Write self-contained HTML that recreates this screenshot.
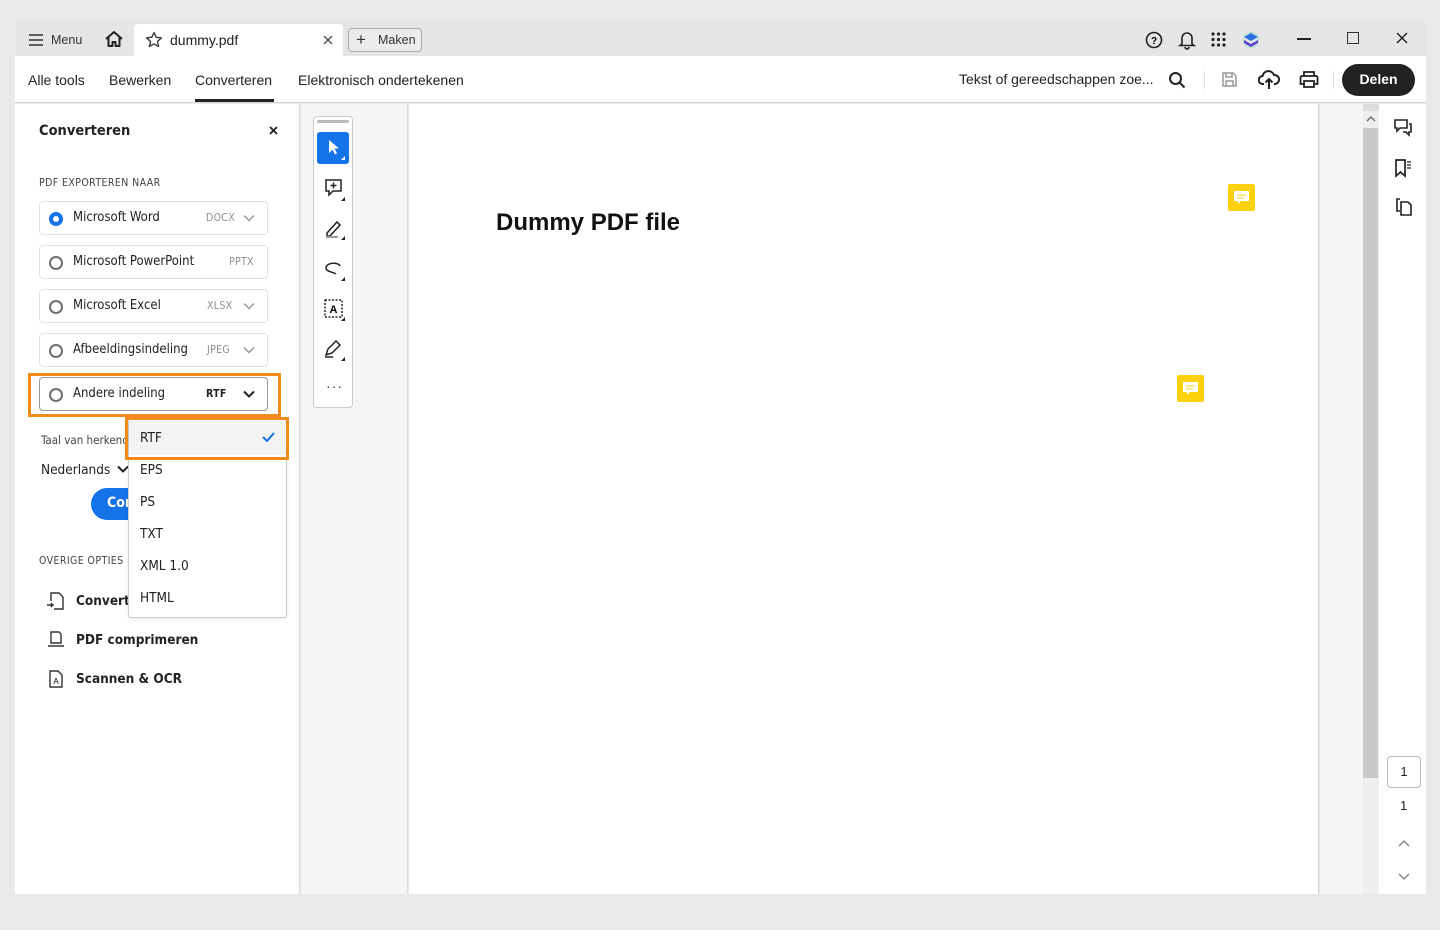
<!DOCTYPE html>
<html><head><meta charset="utf-8"><style>
*{box-sizing:border-box;margin:0;padding:0}
body{width:1440px;height:930px;background:#e9e9e9;font-family:"Liberation Sans",sans-serif;position:relative;overflow:hidden;color:#222}
.a{position:absolute}
.sn{font-family:"DejaVu Sans Condensed","Liberation Sans",sans-serif}
.opt{position:absolute;left:39px;width:229px;height:34px;border:1px solid #e1e1e1;border-radius:4px;background:#fff}
.opt .r{position:absolute;left:9px;top:10px;width:14px;height:14px;border:2px solid #6e6e6e;border-radius:50%}
.opt .l{position:absolute;left:33px;top:8px;font-size:13px;color:#222}
.opt .f{position:absolute;top:10px;font-size:10.5px;color:#8e8e8e;letter-spacing:.3px}
.opt svg{position:absolute;right:12px;top:12px}
.dd{position:absolute;left:140px;font-size:13.5px;color:#222}
.ti{position:absolute;left:322px;width:24px;height:24px}
</style></head><body>
<div class="a" style="left:15px;top:21px;width:1411px;height:35px;background:#e6e6e6"></div>
<div class="a" style="left:15px;top:56px;width:1411px;height:47px;background:#fff;border-bottom:1px solid #d5d5d5"></div>
<svg class="a" style="left:28px;top:33px" width="16" height="14"><path d="M1 2h14M1 7h14M1 12h14" stroke="#333" stroke-width="1.6"/></svg>
<div class="a" style="left:51px;top:33px;font-size:12.5px;color:#333">Menu</div>
<svg class="a" style="left:104px;top:30px" width="20" height="18"><path d="M2 9L10 2l8 7M4.5 7.5V16h4v-4h3v4h4V7.5" fill="none" stroke="#222" stroke-width="2" stroke-linejoin="round"/></svg>
<div class="a" style="left:134px;top:24px;width:209px;height:32px;background:#fff;border-radius:4px 4px 0 0"></div>
<svg class="a" style="left:145px;top:31px" width="18" height="17"><path d="M9 1.5l2.2 4.8 5.2.6-3.9 3.5 1.1 5.1L9 12.9 4.4 15.5l1.1-5.1L1.6 6.9l5.2-.6z" fill="none" stroke="#444" stroke-width="1.5" stroke-linejoin="round"/></svg>
<div class="a" style="left:170px;top:32px;font-size:14px;color:#222">dummy.pdf</div>
<svg class="a" style="left:323px;top:35px" width="10" height="10"><path d="M1 1l8 8M9 1L1 9" stroke="#555" stroke-width="1.5"/></svg>
<div class="a" style="left:348px;top:28px;width:74px;height:24px;border:1px solid #aaa;border-radius:4px;background:#ececec"></div>
<div class="a" style="left:356px;top:30px;font-size:17px;color:#333">+</div>
<div class="a" style="left:378px;top:33px;font-size:12.5px;color:#333">Maken</div>
<svg class="a" style="left:1145px;top:31px" width="18" height="18"><circle cx="9" cy="9" r="7.5" fill="none" stroke="#222" stroke-width="1.6"/><text x="9" y="13" font-size="10" font-weight="bold" text-anchor="middle" font-family="Liberation Sans">?</text></svg>
<svg class="a" style="left:1178px;top:30px" width="18" height="20"><path d="M4 14V8a5 5 0 0110 0v6l2 1.5H2zM7 17a2 2 0 004 0" fill="none" stroke="#222" stroke-width="1.6"/></svg>
<svg class="a" style="left:1211px;top:32px" width="15" height="15" fill="#222"><circle cx="2" cy="2" r="1.6"/><circle cx="7.5" cy="2" r="1.6"/><circle cx="13" cy="2" r="1.6"/><circle cx="2" cy="7.5" r="1.6"/><circle cx="7.5" cy="7.5" r="1.6"/><circle cx="13" cy="7.5" r="1.6"/><circle cx="2" cy="13" r="1.6"/><circle cx="7.5" cy="13" r="1.6"/><circle cx="13" cy="13" r="1.6"/></svg>
<svg class="a" style="left:1243px;top:32px" width="16" height="16"><path d="M8 1l7 4-7 4-7-4z" fill="#2a6fe0"/><path d="M1 8l7 4 7-4v3l-7 4-7-4z" fill="#5b3fcf"/><circle cx="8" cy="8" r="7.5" fill="none" stroke="#6dd9b5" stroke-width=".8" opacity=".6"/></svg>
<div class="a" style="left:1297px;top:38px;width:14px;height:2px;background:#222"></div>
<div class="a" style="left:1347px;top:32px;width:12px;height:12px;border:1.5px solid #333"></div>
<svg class="a" style="left:1396px;top:32px" width="12" height="12"><path d="M1 1l10 10M11 1L1 11" stroke="#222" stroke-width="1.5"/></svg>
<div class="a" style="left:28px;top:72px;font-size:14px">Alle tools</div>
<div class="a" style="left:109px;top:72px;font-size:14px">Bewerken</div>
<div class="a" style="left:195px;top:72px;font-size:14px">Converteren</div>
<div class="a" style="left:195px;top:99px;width:79px;height:3px;background:#222"></div>
<div class="a" style="left:298px;top:72px;font-size:14px">Elektronisch ondertekenen</div>
<div class="a" style="left:959px;top:71px;font-size:14px">Tekst of gereedschappen zoe...</div>
<svg class="a" style="left:1168px;top:71px" width="18" height="18"><circle cx="7.5" cy="7.5" r="5.5" fill="none" stroke="#222" stroke-width="2"/><path d="M11.5 11.5l5 5" stroke="#222" stroke-width="2"/></svg>
<div class="a" style="left:1204px;top:71px;width:1px;height:18px;background:#ddd"></div>
<svg class="a" style="left:1221px;top:71px" width="17" height="17"><path d="M2 2h10l3 3v10H2z M5 2v4h6V2 M5 15v-5h7v5" fill="none" stroke="#999" stroke-width="1.5"/></svg>
<svg class="a" style="left:1258px;top:69px" width="22" height="22"><path d="M6 15H5a4 4 0 01-.5-8A6 6 0 0116 6a4.5 4.5 0 011 9h-1M11 20V10M7.5 13.5L11 10l3.5 3.5" fill="none" stroke="#222" stroke-width="2"/></svg>
<svg class="a" style="left:1299px;top:70px" width="20" height="19"><path d="M5 6V2h10v4M3 6h14a1.5 1.5 0 011.5 1.5V14H15M5 14H1.5V7.5A1.5 1.5 0 013 6M5 11h10v6H5z" fill="none" stroke="#222" stroke-width="1.8"/></svg>
<div class="a" style="left:1333px;top:71px;width:1px;height:18px;background:#ddd"></div>
<div class="a" style="left:1342px;top:64px;width:73px;height:32px;background:#222;border-radius:16px;color:#fff;font-weight:bold;font-size:14px;text-align:center;line-height:31px">Delen</div>
<div class="a" style="left:15px;top:104px;width:285px;height:790px;background:#fff;border-right:1px solid #d8d8d8"></div>
<div class="a sn" style="left:39px;top:123px;font-size:14.5px;font-weight:bold">Converteren</div>
<svg class="a" style="left:269px;top:126px" width="9" height="9"><path d="M1 1l7 7M8 1L1 8" stroke="#222" stroke-width="1.8"/></svg>
<div class="a sn" style="left:39px;top:177px;font-size:10.5px;color:#444;letter-spacing:.4px">PDF EXPORTEREN NAAR</div>
<div class="opt sn" style="top:201px"><div class="r" style="border:4px solid #1473e6;background:#fff"></div><div class="l">Microsoft Word</div><div class="f" style="left:166px">DOCX</div><svg width="12" height="8"><path d="M1 1.5l5 5 5-5" fill="none" stroke="#999" stroke-width="1.5"/></svg></div>
<div class="opt sn" style="top:245px"><div class="r"></div><div class="l">Microsoft PowerPoint</div><div class="f" style="left:189px">PPTX</div></div>
<div class="opt sn" style="top:289px"><div class="r"></div><div class="l">Microsoft Excel</div><div class="f" style="left:167px">XLSX</div><svg width="12" height="8"><path d="M1 1.5l5 5 5-5" fill="none" stroke="#999" stroke-width="1.5"/></svg></div>
<div class="opt sn" style="top:333px"><div class="r"></div><div class="l">Afbeeldingsindeling</div><div class="f" style="left:167px">JPEG</div><svg width="12" height="8"><path d="M1 1.5l5 5 5-5" fill="none" stroke="#999" stroke-width="1.5"/></svg></div>
<div class="opt sn" style="top:377px;border-color:#999"><div class="r"></div><div class="l">Andere indeling</div><div class="f" style="left:166px;color:#222;font-weight:bold">RTF</div><svg width="12" height="8"><path d="M1 1.5l5 5 5-5" fill="none" stroke="#222" stroke-width="2"/></svg></div>
<div class="a" style="left:28px;top:373px;width:253px;height:44px;border:3px solid #f38b1c"></div>
<div class="a sn" style="left:41px;top:433px;font-size:11.5px;color:#444">Taal van herkend</div>
<div class="a sn" style="left:41px;top:462px;font-size:13.5px">Nederlands</div>
<svg class="a" style="left:117px;top:465px" width="12" height="8"><path d="M1 1.5l5 5 5-5" fill="none" stroke="#222" stroke-width="2"/></svg>
<div class="a sn" style="left:91px;top:488px;width:60px;height:32px;background:#1473e6;border-radius:16px;color:#fff;font-weight:bold;font-size:14px;padding:7px 0 0 16px">Con</div>
<div class="a sn" style="left:39px;top:555px;font-size:10.5px;color:#444;letter-spacing:.4px">OVERIGE OPTIES</div>
<svg class="a" style="left:46px;top:591px" width="20" height="20"><path d="M5 10V2h8l4 4v12H8" fill="none" stroke="#333" stroke-width="1.4"/><path d="M1 14h6M5 12l2 2-2 2" fill="none" stroke="#333" stroke-width="1.4"/></svg>
<div class="a sn" style="left:76px;top:593px;font-size:13.5px;font-weight:bold">Converte</div>
<svg class="a" style="left:46px;top:630px" width="20" height="20"><path d="M5 13V2h8l2 2v9zM2 16h16" fill="none" stroke="#333" stroke-width="1.4"/></svg>
<div class="a sn" style="left:76px;top:632px;font-size:13.5px;font-weight:bold">PDF comprimeren</div>
<svg class="a" style="left:46px;top:669px" width="20" height="20"><path d="M4 2h8l4 4v12H4z" fill="none" stroke="#333" stroke-width="1.4"/><text x="10" y="15" font-size="8" text-anchor="middle" font-family="Liberation Sans">A</text></svg>
<div class="a sn" style="left:76px;top:671px;font-size:13.5px;font-weight:bold">Scannen &amp; OCR</div>
<div class="a" style="left:128px;top:418px;width:159px;height:200px;background:#fff;border:1px solid #ccc;border-radius:3px;box-shadow:0 1px 3px rgba(0,0,0,.1)"></div>
<div class="a" style="left:129px;top:421px;width:157px;height:34px;background:#f3f3f3"></div>
<div class="dd sn" style="top:430px">RTF</div>
<svg class="a" style="left:262px;top:431px" width="13" height="11"><path d="M1 6l4 4 7-8" fill="none" stroke="#1473e6" stroke-width="2"/></svg>
<div class="dd sn" style="top:462px">EPS</div>
<div class="dd sn" style="top:494px">PS</div>
<div class="dd sn" style="top:526px">TXT</div>
<div class="dd sn" style="top:558px">XML 1.0</div>
<div class="dd sn" style="top:590px">HTML</div>
<div class="a" style="left:125px;top:417px;width:164px;height:43px;border:3px solid #f38b1c"></div>
<div class="a" style="left:301px;top:104px;width:107px;height:790px;background:#f5f5f5;border-right:1px solid #ddd"></div>
<div class="a" style="left:313px;top:116px;width:40px;height:292px;background:#fff;border:1px solid #ccc;border-radius:4px"></div>
<div class="a" style="left:317px;top:120px;width:32px;height:3px;background:#bbb;border-radius:2px"></div>
<div class="a" style="left:317px;top:132px;width:32px;height:32px;background:#1473e6;border-radius:3px"></div>
<svg class="a" style="left:317px;top:132px" width="32" height="32"><path d="M12 8v13l3.5-3.5 2.5 5 2-1-2.5-5H22z" fill="#fff"/><path d="M28 24v4h-4z" fill="#fff"/></svg>
<svg class="ti" style="top:177px"><path d="M4 3h15v11h-8l-4 4v-4H4z M11.5 5.5v6M8.5 8.5h6" fill="none" stroke="#222" stroke-width="1.5"/><path d="M23 20v4h-4z" fill="#222"/></svg>
<svg class="ti" style="top:216px"><path d="M5 17l10-11 3 3-10 11H5z" fill="none" stroke="#222" stroke-width="1.5"/><path d="M4 21h12" stroke="#999" stroke-width="2"/><path d="M23 20v4h-4z" fill="#222"/></svg>
<svg class="ti" style="top:257px"><path d="M18 9c-1-4-14-4-14 2 0 4 8 4 10 6" fill="none" stroke="#222" stroke-width="1.5"/><path d="M23 20v4h-4z" fill="#222"/></svg>
<svg class="ti" style="top:297px"><rect x="3" y="3" width="17" height="17" fill="none" stroke="#222" stroke-width="1.5" stroke-dasharray="2 1.5"/><text x="11.5" y="16" font-size="11" font-weight="bold" text-anchor="middle" font-family="Liberation Sans">A</text><path d="M23 20v4h-4z" fill="#222"/></svg>
<svg class="ti" style="top:337px"><path d="M4 18l2-6 8-8 4 4-8 8zM3 20h8" fill="none" stroke="#222" stroke-width="1.5"/><path d="M23 20v4h-4z" fill="#222"/></svg>
<div class="a" style="left:326px;top:378px;font-size:14px;color:#333;letter-spacing:1px">···</div>
<div class="a" style="left:409px;top:104px;width:910px;height:790px;background:#fff;border-right:1px solid #d5d5d5"></div>
<div class="a" style="left:496px;top:209px;font-size:24px;font-weight:bold;color:#111">Dummy PDF file</div>
<div class="a" style="left:1228px;top:184px;width:27px;height:27px;background:#fdd20d;border-radius:2px"></div>
<svg class="a" style="left:1233px;top:190px" width="17" height="16"><path d="M1 1h15v10H8l-3 3v-3H1z" fill="#fff"/><path d="M4 5h9M4 8h7" stroke="#fdd20d" stroke-width="1"/></svg>
<div class="a" style="left:1177px;top:375px;width:27px;height:27px;background:#fdd20d;border-radius:2px"></div>
<svg class="a" style="left:1182px;top:381px" width="17" height="16"><path d="M1 1h15v10H8l-3 3v-3H1z" fill="#fff"/><path d="M4 5h9M4 8h7" stroke="#fdd20d" stroke-width="1"/></svg>
<div class="a" style="left:1320px;top:104px;width:43px;height:790px;background:#f5f5f5"></div>
<div class="a" style="left:1363px;top:104px;width:16px;height:790px;background:#efefef"></div>
<div class="a" style="left:1363px;top:104px;width:16px;height:7px;background:#ddd"></div>
<svg class="a" style="left:1366px;top:116px" width="10" height="6"><path d="M1 5l4-4 4 4" fill="none" stroke="#666" stroke-width="1.3"/></svg>
<div class="a" style="left:1363px;top:128px;width:15px;height:650px;background:#c8c8c8"></div>
<div class="a" style="left:1379px;top:104px;width:47px;height:790px;background:#fff"></div>
<svg class="a" style="left:1393px;top:118px" width="20" height="20"><path d="M2 2h12v8H7l-3 3v-3H2z" fill="none" stroke="#222" stroke-width="1.6"/><path d="M16 6h2v8h-2v3l-3-3h-3" fill="none" stroke="#222" stroke-width="1.6"/></svg>
<svg class="a" style="left:1394px;top:158px" width="20" height="20"><path d="M2 2h9v16l-4.5-4L2 18z" fill="none" stroke="#222" stroke-width="1.7"/><path d="M13 4h4M13 7h4M13 10h4" stroke="#222" stroke-width="1.2"/></svg>
<svg class="a" style="left:1394px;top:197px" width="20" height="20"><path d="M6 2H3v12h3" fill="none" stroke="#222" stroke-width="1.6"/><path d="M7 5h7l3 3v10H7z" fill="none" stroke="#222" stroke-width="1.6"/></svg>
<div class="a" style="left:1387px;top:756px;width:34px;height:32px;border:1px solid #bbb;border-radius:4px;text-align:center;font-size:13px;line-height:30px">1</div>
<div class="a" style="left:1400px;top:798px;font-size:13px">1</div>
<svg class="a" style="left:1398px;top:840px" width="12" height="7"><path d="M1 6l5-5 5 5" fill="none" stroke="#888" stroke-width="1.5"/></svg>
<svg class="a" style="left:1398px;top:873px" width="12" height="7"><path d="M1 1l5 5 5-5" fill="none" stroke="#888" stroke-width="1.5"/></svg>
</body></html>
